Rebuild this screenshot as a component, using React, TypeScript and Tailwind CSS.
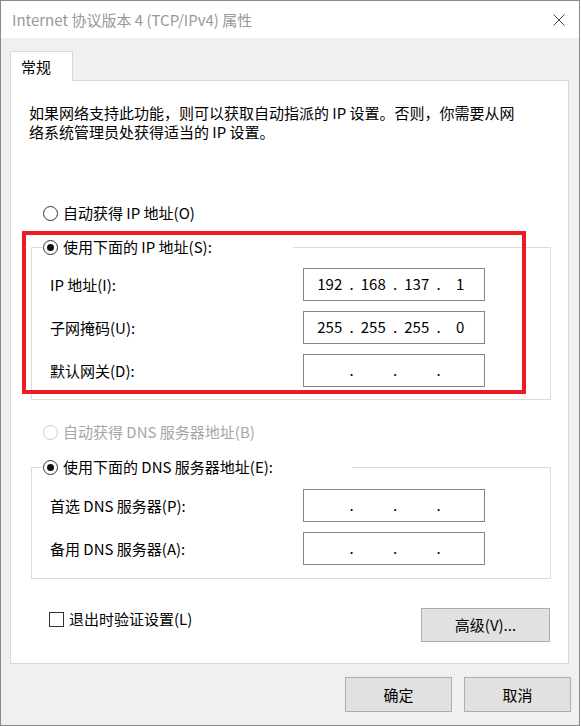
import React, { Fragment } from "react";

function Radio({ checked, disabled }: { checked?: boolean; disabled?: boolean }) {
  return (
    <span
      className={
        disabled
          ? "w-[15px] h-[15px] rounded-full border border-[#cccccc] bg-white flex items-center justify-center shrink-0"
          : "w-[15px] h-[15px] rounded-full border border-[#333333] bg-white flex items-center justify-center shrink-0"
      }
    >
      {checked && <span className="w-[7px] h-[7px] rounded-full bg-[#111111]" />}
    </span>
  );
}

function IpBox({ parts }: { parts: string[] }) {
  return (
    <div className="w-[182px] h-[33px] border border-[#848484] bg-white flex items-center pl-[4px] text-[15px] text-black">
      {parts.map((p, i) => (
        <Fragment key={i}>
          <span className="w-[43.5px] shrink-0 text-center">{p}</span>
          {i < 3 && <span className="w-0 flex justify-center">.</span>}
        </Fragment>
      ))}
    </div>
  );
}

function Row({ label, parts }: { label: string; parts: string[] }) {
  return (
    <div className="grid grid-cols-[253px_182px] items-center h-[33px]">
      <span className="leading-[20px]">{label}</span>
      <IpBox parts={parts} />
    </div>
  );
}

export default function App() {
  return (
    <div className="bg-white w-[581px] h-[726px] font-['Noto_Sans_CJK_SC',sans-serif] text-[15px] text-black">
      <div className="relative w-[580px] h-[726px] border border-[#8a8a8a] bg-[#f0f0f0] flex flex-col">
        {/* Title bar */}
        <div className="h-[37px] bg-white flex items-center justify-between pl-[11px] pr-[14px] shrink-0">
          <span className="text-[#999999] leading-[20px]">Internet 协议版本 4 (TCP/IPv4) 属性</span>
          <svg width="12" height="12" viewBox="0 0 12 12" className="shrink-0">
            <path d="M0.5 0.5 L11.5 11.5 M11.5 0.5 L0.5 11.5" stroke="#444444" strokeWidth="1" fill="none" />
          </svg>
        </div>

        {/* Tabs */}
        <div className="pt-[13px] pl-[9px] flex shrink-0">
          <div className="relative z-10 w-[63px] h-[30px] -mb-px bg-white border-t border-l border-r border-[#d9d9d9] pl-[10px] flex items-center">
            <span className="leading-[20px]">常规</span>
          </div>
        </div>

        {/* Tab panel */}
        <div className="ml-[9px] mr-[10px] h-[584px] bg-white border border-[#d9d9d9] flex flex-col shrink-0">
          <p className="pt-[22px] pl-[18px] pr-[10px] leading-[19px]">
            如果网络支持此功能，则可以获取自动指派的 IP 设置。否则，你需要从网
            <br />
            络系统管理员处获得适当的 IP 设置。
          </p>

          <div className="mt-[62px] pl-[32px] h-[20px] flex items-center gap-[5px]">
            <Radio />
            <span className="leading-[20px]">自动获得 IP 地址(O)</span>
          </div>

          {/* Group 1 */}
          <div className="mt-[24px] ml-[20px] mr-[17px] border border-[#dcdcdc] pb-[12px]">
            <div className="-mt-[11px] ml-[11px] w-[250px] h-[20px] bg-white flex items-center gap-[5px]">
              <Radio checked />
              <span className="leading-[20px]">使用下面的 IP 地址(S):</span>
            </div>
            <div className="mt-[11px] pl-[18px] flex flex-col gap-[10px]">
              <Row label="IP 地址(I):" parts={["192", "168", "137", "1"]} />
              <Row label="子网掩码(U):" parts={["255", "255", "255", "0"]} />
              <Row label="默认网关(D):" parts={["", "", "", ""]} />
            </div>
          </div>

          <div className="mt-[22px] pl-[32px] h-[20px] flex items-center gap-[5px]">
            <Radio disabled />
            <span className="leading-[20px] text-[#a6a6a6]">自动获得 DNS 服务器地址(B)</span>
          </div>

          {/* Group 2 */}
          <div className="mt-[25px] ml-[20px] mr-[17px] border border-[#dcdcdc] pb-[13px]">
            <div className="-mt-[11px] ml-[11px] w-[309px] h-[20px] bg-white flex items-center gap-[5px]">
              <Radio checked />
              <span className="leading-[20px]">使用下面的 DNS 服务器地址(E):</span>
            </div>
            <div className="mt-[12px] pl-[18px] flex flex-col gap-[10px]">
              <Row label="首选 DNS 服务器(P):" parts={["", "", "", ""]} />
              <Row label="备用 DNS 服务器(A):" parts={["", "", "", ""]} />
            </div>
          </div>

          <div className="mt-[29px] pl-[38px] pr-[18px] flex justify-between items-start">
            <div className="mt-px h-[20px] flex items-center gap-[5px]">
              <span className="w-[15px] h-[15px] border border-[#333333] bg-white shrink-0" />
              <span className="leading-[20px]">退出时验证设置(L)</span>
            </div>
            <button className="w-[129px] h-[34px] bg-[#e1e1e1] border border-[#adadad] flex items-center justify-center leading-[20px]">
              高级(V)...
            </button>
          </div>
        </div>

        {/* Bottom buttons */}
        <div className="mt-[13px] pr-[8px] flex justify-end gap-[12px] shrink-0">
          <button className="w-[107px] h-[35px] bg-[#e1e1e1] border border-[#adadad] flex items-center justify-center leading-[20px]">
            确定
          </button>
          <button className="w-[107px] h-[35px] bg-[#e1e1e1] border border-[#adadad] flex items-center justify-center leading-[20px]">
            取消
          </button>
        </div>

        {/* Red annotation box */}
        <div className="absolute left-[21px] top-[230px] w-[504px] h-[163px] border-[4px] border-[#ec1c24] pointer-events-none" />
      </div>
    </div>
  );
}
